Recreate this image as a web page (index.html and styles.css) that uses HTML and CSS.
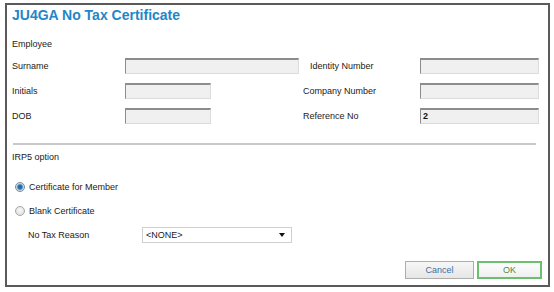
FILE: index.html
```html
<!DOCTYPE html>
<html>
<head>
    <title>JU4GA No Tax Certificate</title>
    <link rel="stylesheet" href="styles.css">
</head>
<body>
    <div class="dialog">
        <h1 class="title">JU4GA No Tax Certificate</h1>

        <div class="section-label employee">Employee</div>
        <div class="fields">
            <label>Surname</label>
            <div><span class="input wide"></span></div>
            <label class="indent">Identity Number</label>
            <div><span class="input right"></span></div>

            <label>Initials</label>
            <div><span class="input short"></span></div>
            <label>Company Number</label>
            <div><span class="input right"></span></div>

            <label>DOB</label>
            <div><span class="input short"></span></div>
            <label>Reference No</label>
            <div><span class="input right">2</span></div>
        </div>

        <hr class="sep">

        <div class="section-label irp5">IRP5 option</div>
        <div class="radio-row first"><span class="radio checked"></span>Certificate for Member</div>
        <div class="radio-row"><span class="radio"></span>Blank Certificate</div>

        <div class="reason-row">
            <span class="reason-label">No Tax Reason</span>
            <div class="select"><span>&lt;NONE&gt;</span><span class="arrow"></span></div>
        </div>

        <div class="buttons">
            <button class="btn cancel">Cancel</button>
            <button class="btn ok">OK</button>
        </div>
    </div>
</body>
</html>
```

FILE: styles.css
```css
body {
  margin: 0;
  font-family: "Liberation Sans", Arial, sans-serif;
  font-size: 9px;
  color: #1a1a1a;
  background-color: #fff;
}
.dialog {
  box-sizing: border-box;
  width: 545px;
  height: 284px;
  margin: 3px 0 0 5px;
  padding: 2px 6px 0 5px;
  border: 2px solid #5a5a5a;
}
.title {
  margin: 0;
  font-size: 14px;
  line-height: 17px;
  font-weight: bold;
  color: #2386c6;
}
.section-label {
  line-height: 11px;
}
.employee {
  margin-top: 15px;
}
.fields {
  display: grid;
  grid-template-columns: 113px 178px 117px 120px;
  grid-auto-rows: 16px;
  row-gap: 9px;
  align-items: center;
  margin-top: 8px;
}
.fields div {
  display: flex;
}
.fields .indent {
  padding-left: 7px;
}
.input {
  box-sizing: border-box;
  display: block;
  height: 16px;
  padding-left: 2px;
  background-color: #f0f0f0;
  border: 1px solid #dcdcdc;
  border-top: 2px solid #8c8c8c;
  border-left: 1px solid #8c8c8c;
  font-weight: bold;
  font-size: 9px;
  line-height: 13px;
  color: #111;
}
.wide {
  width: 174px;
}
.short {
  width: 86px;
}
.right {
  width: 119px;
}
.sep {
  height: 0;
  margin: 19px 6px 0 1px;
  border: 0;
  border-top: 2px solid #c8c8c8;
}
.irp5 {
  margin-top: 7px;
}
.radio-row {
  display: flex;
  align-items: center;
  height: 14px;
  margin-top: 10px;
  margin-left: 3px;
}
.radio-row.first {
  margin-top: 17px;
}
.radio {
  box-sizing: border-box;
  width: 10px;
  height: 10px;
  margin-right: 4px;
  border-radius: 50%;
  border: 1px solid #a8a8a8;
  background: radial-gradient(circle at 50% 40%, #fafafa, #d6d6d6);
}
.radio.checked {
  border-color: #7a8a9a;
  background: radial-gradient(circle, #1f5f96 0, #2c76b4 2px, #9cc3e4 3.2px, #e4e4e4 3.8px, #cfcfcf 5px);
}
.reason-row {
  display: flex;
  align-items: center;
  margin-top: 9px;
  margin-left: 16px;
}
.reason-label {
  width: 114px;
}
.select {
  box-sizing: border-box;
  display: flex;
  align-items: center;
  justify-content: space-between;
  width: 150px;
  height: 16px;
  padding: 0 6px 0 3px;
  background-color: #fff;
  border: 1px solid #cfcfcf;
}
.arrow {
  width: 0;
  height: 0;
  border-left: 3px solid transparent;
  border-right: 3px solid transparent;
  border-top: 4px solid #111;
}
.buttons {
  display: flex;
  justify-content: flex-end;
  gap: 3px;
  margin-top: 18px;
}
.btn {
  box-sizing: border-box;
  height: 18px;
  padding: 0;
  font-family: "Liberation Sans", Arial, sans-serif;
  font-size: 9px;
  cursor: pointer;
}
.cancel {
  width: 69px;
  color: #3f6f9f;
  border: 1px solid #adadad;
  background: linear-gradient(#f7f7f7, #e6e6e6);
}
.ok {
  width: 65px;
  color: #4d8a4d;
  border: 2px solid #6cbf6c;
  background: linear-gradient(#fdfdfd, #f0f0f0);
}
```
